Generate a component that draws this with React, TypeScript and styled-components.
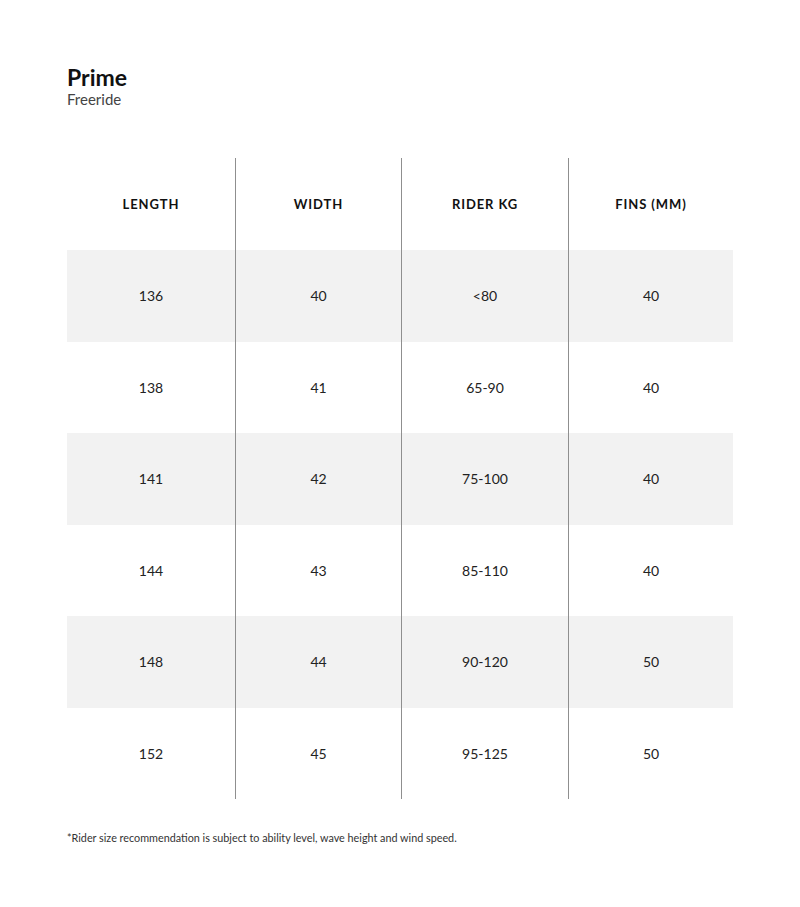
import React from "react";
import styled, { createGlobalStyle } from "styled-components";

const GlobalStyle = createGlobalStyle`
  body {
    margin: 0;
    background: #fff;
    font-family: Lato, "Open Sans", Arial, sans-serif;
    color: #1a1a1a;
  }
`;

const Page = styled.main`
  padding: 64px 67px 40px;
`;

const Title = styled.h1`
  margin: 0;
  font-size: 23px;
  line-height: 26px;
  font-weight: 700;
  color: #111;
`;

const Subtitle = styled.div`
  font-size: 15px;
  line-height: 18px;
  color: #444;
`;

const Table = styled.div`
  margin-top: 50px;
  width: 666px;
`;

const Row = styled.div<{ $shade?: boolean; $head?: boolean }>`
  display: grid;
  grid-template-columns: 168px 166px 167px 165px;
  height: ${(p) => (p.$head ? "92px" : "91.5px")};
  background: ${(p) => (p.$shade ? "#f2f2f2" : "transparent")};
`;

const Cell = styled.div<{ $head?: boolean }>`
  display: flex;
  align-items: center;
  justify-content: center;
  font-size: ${(p) => (p.$head ? "13px" : "14px")};
  font-weight: ${(p) => (p.$head ? 700 : 400)};
  letter-spacing: ${(p) => (p.$head ? "0.9px" : "0")};
  color: ${(p) => (p.$head ? "#111" : "#222")};
  & + & {
    border-left: 1px solid #8f8f8f;
  }
`;

const Note = styled.p`
  margin: 32px 0 0;
  font-size: 10.8px;
  color: #333;
`;

const headers = ["LENGTH", "WIDTH", "RIDER KG", "FINS (MM)"];

const rows = [
  ["136", "40", "<80", "40"],
  ["138", "41", "65-90", "40"],
  ["141", "42", "75-100", "40"],
  ["144", "43", "85-110", "40"],
  ["148", "44", "90-120", "50"],
  ["152", "45", "95-125", "50"],
];

export default function App() {
  return (
    <>
      <GlobalStyle />
      <Page>
        <Title>Prime</Title>
        <Subtitle>Freeride</Subtitle>
        <Table>
          <Row $head>
            {headers.map((h) => (
              <Cell key={h} $head>
                {h}
              </Cell>
            ))}
          </Row>
          {rows.map((r, i) => (
            <Row key={r[0]} $shade={i % 2 === 0}>
              {r.map((v, j) => (
                <Cell key={j}>{v}</Cell>
              ))}
            </Row>
          ))}
        </Table>
        <Note>*Rider size recommendation is subject to ability level, wave height and wind speed.</Note>
      </Page>
    </>
  );
}
